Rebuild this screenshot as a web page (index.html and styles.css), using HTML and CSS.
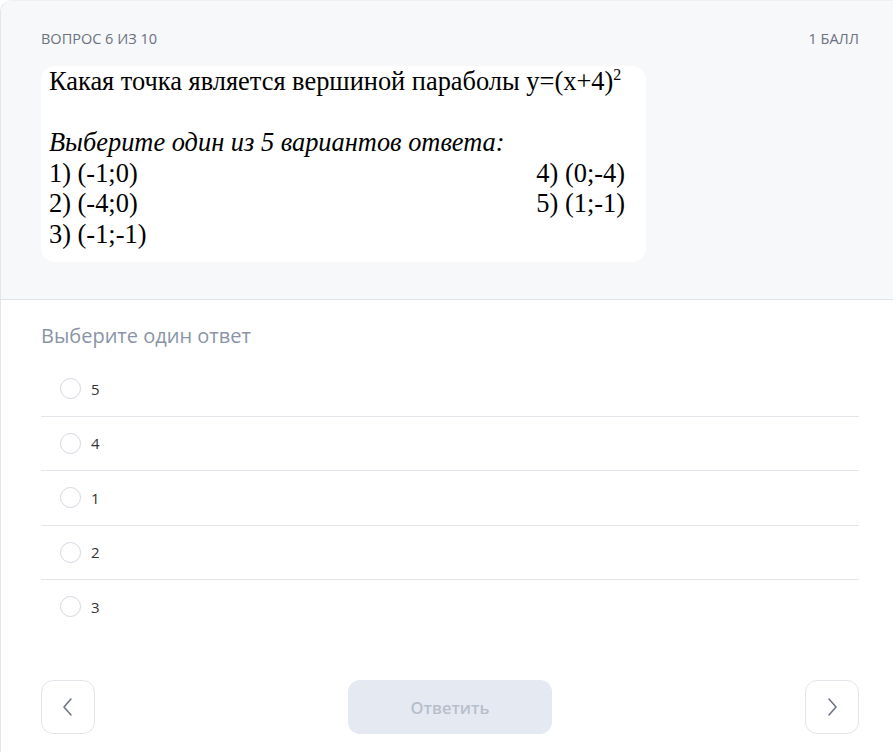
FILE: index.html
```html
<!DOCTYPE html>
<html lang="ru">

<head>
    <meta charset="UTF-8">
    <title>Вопрос 6 из 10</title>

    <link rel="stylesheet" href="styles.css">

</head>

<body>

    <div class="kort">
        <section class="top">
            <div class="linje">
                <span>ВОПРОС 6 ИЗ 10</span>
                <span>1 БАЛЛ</span>
            </div>
            <div class="billede">
                <p>Какая точка является вершиной параболы y=(x+4)<sup>2</sup></p>
                <p>&nbsp;</p>
                <p><i>Выберите один из 5 вариантов ответа:</i></p>
                <div class="svar">
                    <div>
                        <p>1) (-1;0)</p>
                        <p>2) (-4;0)</p>
                        <p>3) (-1;-1)</p>
                    </div>
                    <div>
                        <p>4) (0;-4)</p>
                        <p>5) (1;-1)</p>
                    </div>
                </div>
            </div>
        </section>

        <section class="indhold">
            <h2>Выберите один ответ</h2>
            <ul class="valg">
                <li><span class="cirkel"></span>5</li>
                <li><span class="cirkel"></span>4</li>
                <li><span class="cirkel"></span>1</li>
                <li><span class="cirkel"></span>2</li>
                <li><span class="cirkel"></span>3</li>
            </ul>

            <nav>
                <button class="pil">
                    <svg width="12" height="20" viewBox="0 0 12 20"><path d="M9 2 L2 10 L9 18" fill="none" stroke="#6b7280" stroke-width="1.5" stroke-linecap="round" stroke-linejoin="round"/></svg>
                </button>
                <button class="svar-knap">Ответить</button>
                <button class="pil">
                    <svg width="12" height="20" viewBox="0 0 12 20"><path d="M3 2 L10 10 L3 18" fill="none" stroke="#6b7280" stroke-width="1.5" stroke-linecap="round" stroke-linejoin="round"/></svg>
                </button>
            </nav>
        </section>
    </div>

</body>

</html>
```

FILE: styles.css
```css
body {
    margin: 0;
    background: #fff;
    font-family: "Open Sans", "Noto Sans", sans-serif;
}

.kort {
    border-left: 1px solid #e3e6eb;
    border-top: 1px solid #eef0f3;
    border-top-left-radius: 12px;
    height: 751px;
    overflow: hidden;
}

.top {
    background: #f7f8fa;
    height: 298px;
    border-bottom: 1px solid #dfe3e8;
    padding: 0 34px 0 40px;
}

.linje {
    display: flex;
    justify-content: space-between;
    padding-top: 28px;
    height: 37px;
    font-size: 14.5px;
    color: #6b7280;
}

.billede {
    width: 597px;
    height: 196px;
    background: #fff;
    border-radius: 14px;
    padding: 0 0 0 8px;
    font-family: "Liberation Serif", "Times New Roman", serif;
    font-size: 26.4px;
    color: #000;
}

.billede p {
    margin: 0;
    line-height: 30.5px;
}

.billede sup {
    font-size: 16px;
    line-height: 0;
}

.svar {
    display: flex;
    justify-content: space-between;
    width: 576px;
}

.indhold {
    padding: 0 34px 0 40px;
}

h2 {
    margin: 22px 0 0;
    font-size: 20px;
    font-weight: 400;
    color: #8a94a6;
    height: 40px;
}

.valg {
    list-style: none;
    margin: 0;
    padding: 0;
}

.valg li {
    display: flex;
    align-items: center;
    height: 53.5px;
    padding-left: 19px;
    border-bottom: 1px solid #e2e5ea;
    font-size: 15px;
    color: #333;
}

.valg li:last-child {
    border-bottom: none;
}

.cirkel {
    width: 19px;
    height: 19px;
    border: 1.5px solid #d3d7de;
    border-radius: 50%;
    margin-right: 10px;
}

nav {
    display: flex;
    justify-content: space-between;
    align-items: center;
    margin-top: 46.5px;
}

button {
    font-family: inherit;
    border: 1px solid #e2e5ea;
    border-radius: 12px;
    background: #fff;
}

.pil {
    width: 54px;
    height: 54px;
    display: flex;
    align-items: center;
    justify-content: center;
}

.svar-knap {
    width: 204px;
    height: 54px;
    border: none;
    background: #e4e9f2;
    color: #b7bfcc;
    font-size: 16.5px;
    font-weight: 600;
}
```
